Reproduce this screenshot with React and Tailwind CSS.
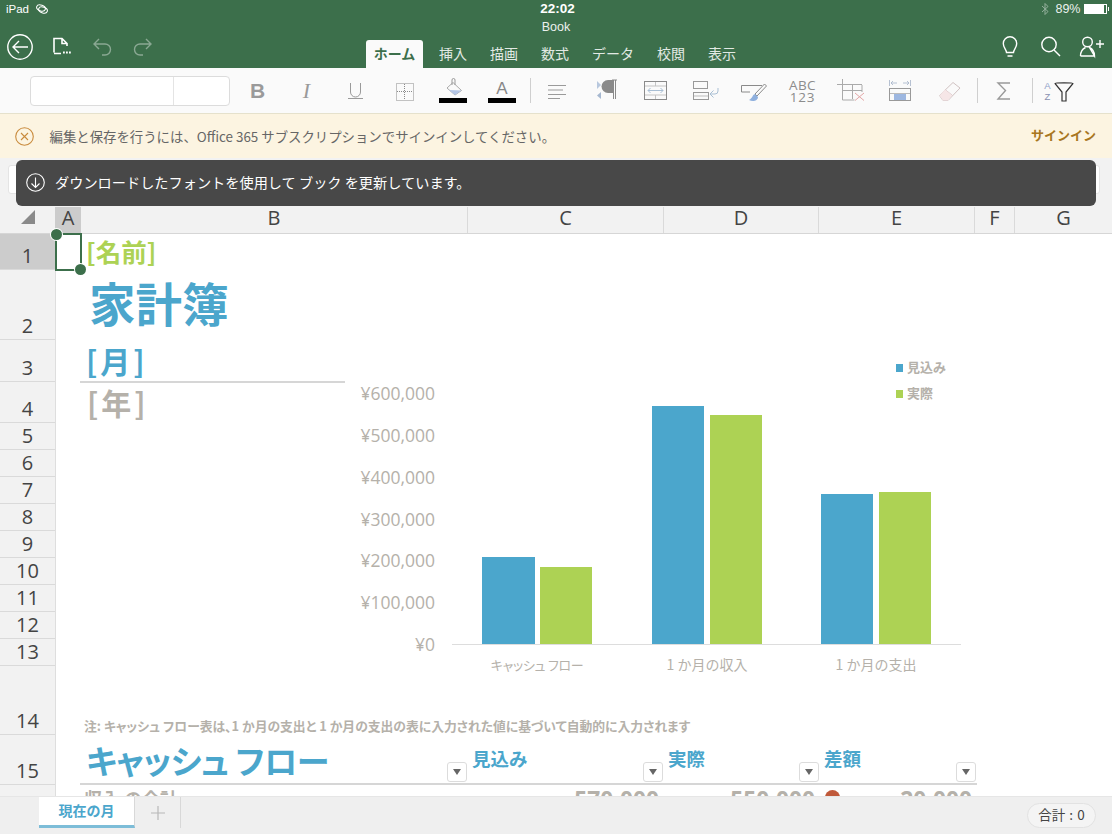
const CJK = { fontFamily: '"Noto Sans CJK JP", "Noto Sans", sans-serif' };
const LAT = { fontFamily: '"Open Sans", "Noto Sans CJK JP", sans-serif' };
const PALT = { fontFeatureSettings: '"palt"' };

function Btn({ children }) {
  return (
    <div className="w-[49px] flex justify-center shrink-0">
      <svg width="31" height="30" viewBox="0 0 31 30" fill="none" className="overflow-visible">{children}</svg>
    </div>
  );
}
const Sep = () => (
  <div className="w-[6px] flex justify-center shrink-0 pt-[2px]">
    <div className="w-px h-[25px] bg-[#cfcfcf]" />
  </div>
);

function HIcon({ children, dim }) {
  return (
    <svg width="30" height="30" viewBox="0 0 30 30" fill="none" stroke="white" strokeWidth="1.4" className={dim ? "opacity-40" : ""}>{children}</svg>
  );
}

function Header() {
  return (
    <div className="h-[68px] shrink-0 bg-[#3c6f4b] flex flex-col text-white" style={CJK}>
      <div className="h-[18px] grid grid-cols-[1fr_auto_1fr] items-center text-[11.5px] leading-[18px]" style={{ fontFamily: '"Liberation Sans", sans-serif' }}>
        <div className="flex items-center">
          <span className="ml-[6px]">iPad</span>
          <svg width="14" height="10" viewBox="0 0 14 10" fill="none" stroke="white" strokeWidth="1" className="ml-[6px]">
            <ellipse cx="6" cy="4" rx="4.5" ry="3" transform="rotate(20 6 4)" />
            <ellipse cx="8" cy="6" rx="4.5" ry="3" transform="rotate(20 8 6)" />
          </svg>
        </div>
        <span className="text-center text-[13.5px] font-bold pl-[3px]">22:02</span>
        <div className="flex items-center justify-end">
          <svg width="8" height="12" viewBox="0 0 8 12" fill="none" stroke="white" strokeWidth="0.9" className="opacity-50 mr-[6px]">
            <path d="M1 3l6 5.500-3 3V.5l3 3L1 9" />
          </svg>
          <span className="text-[12.5px] mr-[3px] opacity-90">89%</span>
          <div className="w-[23px] h-[10px] border border-white flex mr-[1px]">
            <div className="w-[19px] bg-white" />
          </div>
          <div className="w-[1.5px] h-[4px] bg-white mr-[3px]" />
        </div>
      </div>
      <div className="flex-1 flex">
        <div className="w-[158px] pl-[5px] pt-[14px] flex gap-[11px] items-start">
          <HIcon>
            <circle cx="15" cy="15" r="12.2" />
            <path d="M23 15H8M14 9l-6 6 6 6" />
          </HIcon>
          <HIcon>
            <path d="M8 20.500V6.500h8l5 5V14M16 7v4.500h5M8 21.500h7" strokeWidth="1.600" />
            <path d="M17 20.500h1.800M20 20.500h1.800M23 20.500h1.800" strokeWidth="2.200" />
          </HIcon>
          <HIcon dim>
            <path d="M12 7l-5 5 5 5M7 12h11a5.500 5.500 0 0 1 0 11h-3" />
          </HIcon>
          <HIcon dim>
            <g transform="translate(30 0) scale(-1 1)">
              <path d="M12 7l-5 5 5 5M7 12h11a5.500 5.500 0 0 1 0 11h-3" />
            </g>
          </HIcon>
        </div>
        <div className="flex-1 flex flex-col">
          <div className="h-[18px] leading-[18px] text-center text-[12.5px] opacity-90" style={{ fontFamily: '"Liberation Sans", sans-serif' }}>Book</div>
          <div className="mt-[4px] h-[28px] flex pl-[208px] text-[14px] leading-[27px]">
            <div className="w-[57px] mr-[4.5px] bg-[#fafafa] rounded-t-[3px] text-[#3c6f4b] font-bold text-center">ホーム</div>
            {["挿入", "描画", "数式", "データ", "校閲", "表示"].map((t) => (
              <div key={t} className="px-[11.5px] whitespace-nowrap opacity-85">{t}</div>
            ))}
          </div>
        </div>
        <div className="w-[158px] pr-[5px] pt-[14px] flex gap-[11px] items-start justify-end">
          <HIcon>
            <path d="M12.500 24h5M11.500 20.500c-.3-3.500-3.200-4.800-3.200-9a6.700 6.700 0 0 1 13.400 0c0 4.200-2.900 5.500-3.200 9z" />
          </HIcon>
          <HIcon>
            <circle cx="13" cy="12.500" r="7.200" />
            <path d="M18 18l6 6" />
          </HIcon>
          <HIcon>
            <circle cx="10.500" cy="10" r="4.800" />
            <path d="M3.500 24c0-4.500 2-7 5-8.500M12.500 15.500c3 1.500 5 4 5 8.500zM3.500 24h14" />
            <path d="M19 12h8M23 8v8" />
          </HIcon>
        </div>
      </div>
    </div>
  );
}

function Toolbar() {
  const g = "#9a9a9a";
  return (
    <div className="h-[45px] shrink-0 bg-[#fafafa] flex items-start pt-[8px] pl-[30px]">
      <div className="w-[200px] h-[30px] bg-white border border-[#dcdcdc] rounded-[4px] flex shrink-0 mr-[3px]">
        <div className="w-[143px] border-r border-[#e4e4e4]" />
      </div>
      <Btn><text x="15.500" y="22" textAnchor="middle" fontSize="21" fontWeight="700" fill={g} style={{ fontFamily: '"Liberation Sans", sans-serif' }}>B</text></Btn>
      <Btn><text x="15.500" y="22" textAnchor="middle" fontSize="22" fontStyle="italic" fill={g} style={{ fontFamily: '"Liberation Serif", serif' }}>I</text></Btn>
      <Btn><path d="M10.500 7v9a5 5 0 0 0 10 0V7M8 22.500h15" stroke={g} /></Btn>
      <Btn>
        <rect x="7.500" y="7.500" width="17" height="17" stroke="#8a8a8a" strokeDasharray="1 1" />
        <path d="M15.500 8v16M8 15.500h16" stroke="#8a8a8a" strokeDasharray="1 1" />
      </Btn>
      <Btn>
        <path d="M9 12l6-5.500 8.500 8-6.500 4.500z" stroke="#aaa" />
        <path d="M11 14l12.500.5-6.500 4.500z" fill="#b4c6e6" />
        <path d="M14 9V4a1.500 1.500 0 0 1 3 0v5" stroke="#999" />
        <rect x="1" y="22" width="28" height="5" fill="#000" />
      </Btn>
      <Btn>
        <text x="15" y="18" textAnchor="middle" fontSize="17" fill="#888" style={{ fontFamily: '"Liberation Sans", sans-serif' }}>A</text>
        <rect x="1" y="22" width="28" height="5" fill="#000" />
      </Btn>
      <Sep />
      <Btn><path d="M6 9.500h18M6 14h15M6 18.500h18M6 22.500h12" stroke={g} /></Btn>
      <Btn>
        <path d="M22 4h-5a6.500 6.500 0 0 0 0 13h5z" fill="#8a8a8a" />
        <path d="M22.500 4v19M24.500 4v19M21 4h5" stroke="#8a8a8a" />
        <path d="M6 5l4 4-4 4z" fill="#b8c8de" />
        <path d="M10 16l-4 3.500 4 3.500z" fill="#a6b8d0" />
      </Btn>
      <Btn>
        <rect x="4.500" y="5.500" width="22" height="18" stroke="#8a8a8a" />
        <path d="M5 10h21M5 19h21M15.500 6v4M15.500 19v4" stroke="#c4c4c4" />
        <path d="M8 14.500h15M10.500 12l-2.500 2.500 2.500 2.500M20.500 12l2.500 2.500-2.500 2.500" stroke="#a9bfd4" />
      </Btn>
      <Btn>
        <rect x="4.500" y="5.500" width="14" height="7" stroke="#999" />
        <rect x="4.500" y="16.500" width="15" height="7" stroke="#999" />
        <path d="M5 20h14" stroke="#bbb" />
        <path d="M29 12v3a3 3 0 0 1-3 3h-5M24.500 14.500L21 18l3.500 3.500" stroke="#a9bfd4" />
      </Btn>
      <Btn>
        <path d="M24 9.500H3.500v6.500H12" stroke="#8a8a8a" />
        <path d="M26.500 8l2 2-9.500 10-2-2z" stroke="#8a8a8a" />
        <path d="M17 18c-3 1-2 4-6 6 4 2.500 9 .5 9-3z" fill="#8fb0de" />
      </Btn>
      <Btn>
        <text x="15.500" y="14" textAnchor="middle" fontSize="13.500" letterSpacing=".4" fill="#8c8c8c" style={{ fontFamily: '"Open Sans", sans-serif' }}>ABC</text>
        <text x="15.500" y="26" textAnchor="middle" fontSize="13.500" letterSpacing=".8" fill="#8c8c8c" style={{ fontFamily: '"Open Sans", sans-serif' }}>123</text>
      </Btn>
      <Btn>
        <path d="M1 8.500h25M6.500 3v21h12M6.500 14.500h19.500M16.500 9v14M26 9v7" stroke="#aaa" />
        <path d="M19 17l9 7.500M28 17l-9 7.500" stroke="#e3a6a6" />
      </Btn>
      <Btn>
        <path d="M4.500 4v6M25.500 4v6M6 7h6M24 7h-6M8 5L6 7l2 2M22 5l2 2-2 2" stroke="#a5b2c8" strokeWidth=".8" />
        <rect x="4.500" y="12.500" width="21" height="12" stroke="#999" />
        <rect x="9" y="18" width="12" height="6" fill="#9db7e0" />
        <path d="M5 17.500h20" stroke="#bbb" />
      </Btn>
      <Btn>
        <path d="M19 6.500l7 5.500-12 12.500H9L5.500 19.500z" stroke="#d0c2c2" />
        <path d="M11 13.500l7.500 6" stroke="#dcc6c8" />
        <path d="M5.500 19.500L11 13.500l7 6-4 5H9z" fill="#f6e6e7" />
      </Btn>
      <Sep />
      <Btn><path d="M21 7H9l7.500 7.500L9 23h12" stroke="#999" strokeWidth="1.400" /></Btn>
      <Sep />
      <Btn>
        <text x="3.500" y="13" textAnchor="middle" fontSize="9.500" fill="#8f9fc8" style={{ fontFamily: '"Liberation Sans", sans-serif' }}>A</text>
        <text x="3.500" y="24" textAnchor="middle" fontSize="9.500" fill="#8890b0" style={{ fontFamily: '"Liberation Sans", sans-serif' }}>Z</text>
        <path d="M11 7.500c0-1 18-1 18 0L22 16v9h-4v-9z" stroke="#333" strokeWidth="1.200" />
      </Btn>
    </div>
  );
}

function Banner() {
  return (
    <div className="h-[45px] shrink-0 bg-[#fcf4e1] border-t border-[#e5e1cc] flex items-center pl-[15px] pr-[16px] text-[13.4px]" style={CJK}>
      <svg width="19" height="19" viewBox="0 0 19 19" fill="none" stroke="#c98b3d" strokeWidth="1.100">
        <circle cx="9.500" cy="9.500" r="8.800" />
        <path d="M6 6l7 7M13 6l-7 7" />
      </svg>
      <span className="ml-[15.5px] text-[#666]">編集と保存を行うには、Office 365 サブスクリプションでサインインしてください。</span>
      <span className="ml-auto text-[13px] font-bold text-[#a8771f] pb-[3px]">サインイン</span>
    </div>
  );
}

function FormulaBar() {
  return (
    <div className="h-[49px] shrink-0 bg-[#f2f2f2] relative pt-[7px] pl-[8px] pr-[12px]" style={CJK}>
      <div className="h-[29px] bg-white border border-[#e4e4e4] rounded-[3px]" />
      <div className="absolute left-[16px] right-[16px] top-[2px] h-[46px] rounded-[6px] bg-[#484848] flex items-center pl-[10px] pb-[1px] text-white text-[14.2px]">
        <svg width="19" height="19" viewBox="0 0 19 19" fill="none" stroke="white" strokeWidth="1.100">
          <circle cx="9.500" cy="9.500" r="8.800" />
          <path d="M9.500 4.500v9.500M5.500 10.500l4 4 4-4" />
        </svg>
        <span className="ml-[10px]">ダウンロードしたフォントを使用して ブック を更新しています。</span>
      </div>
    </div>
  );
}

const COLS = [
  ["A", "w-[26px] bg-[#cccccc]"],
  ["B", "w-[387px] border-r border-[#dadada]"],
  ["C", "w-[196px] border-r border-[#dadada]"],
  ["D", "w-[155px] border-r border-[#dadada]"],
  ["E", "w-[156px] border-r border-[#dadada]"],
  ["F", "w-[40px] border-r border-[#dadada]"],
  ["G", "flex-1"],
];
const ROWS = [36, 70, 42, 41, 27, 27, 27, 27, 27, 27, 27, 27, 27, 69, 50, 40];

function Dropdown({ pos }) {
  return (
    <div className={`absolute bottom-[1px] w-[20px] h-[20px] bg-white border border-[#dcdcdc] rounded-[3px] flex items-center justify-center ${pos}`}>
      <svg width="8" height="6" viewBox="0 0 8 6"><path d="M0 0h8L4 6z" fill="#666" /></svg>
    </div>
  );
}

function Chart() {
  const gray = "#b5b1aa";
  const bars = [
    [482, 557, 53, "#4ba6cc"], [540, 567, 52, "#add254"],
    [652, 406, 52, "#4ba6cc"], [710, 415, 52, "#add254"],
    [821, 494, 52, "#4ba6cc"], [879, 492, 52, "#add254"],
  ];
  const ticks = [["¥600,000", 393], ["¥500,000", 435], ["¥400,000", 477], ["¥300,000", 519], ["¥200,000", 560], ["¥100,000", 602], ["¥0", 644]];
  return (
    <svg className="absolute left-[345px] top-[143px]" width="630" height="330" viewBox="345 350 630 330" style={CJK}>
      {ticks.map(([t, y]) => (
        <text key={t} x="435" y={y + 7} textAnchor="end" fontSize="17.500" fill={gray} style={LAT}>{t}</text>
      ))}
      {bars.map(([x, y, w, c]) => (
        <rect key={x} x={x} y={y} width={w} height={644 - y} fill={c} />
      ))}
      <path d="M452 644.500h509" stroke="#dddddd" />
      <text x="537" y="670" textAnchor="middle" fontSize="13" letterSpacing="-.3" fill={gray} style={PALT}>キャッシュ フロー</text>
      <text x="707" y="670" textAnchor="middle" fontSize="14" fill={gray}>1 か月の収入</text>
      <text x="876" y="670" textAnchor="middle" fontSize="14" fill={gray}>1 か月の支出</text>
      <rect x="896" y="364" width="7" height="8" fill="#4ba6cc" />
      <rect x="896" y="390" width="7" height="8" fill="#add254" />
      <text x="907" y="372" fontSize="13" fontWeight="700" fill={gray}>見込み</text>
      <text x="907" y="398" fontSize="13" fontWeight="700" fill={gray}>実際</text>
    </svg>
  );
}

function Sheet() {
  return (
    <div className="flex-1 min-h-0 relative overflow-hidden bg-white" style={CJK}>
      <div className="h-[27px] flex bg-[#f2f2f2] border-b border-[#d6d6d6] text-[20px] text-[#444] leading-[22px]" style={LAT}>
        <div className="w-[55px] pl-[21px] pt-[3px]">
          <svg width="14" height="14" viewBox="0 0 14 14"><path d="M14 0v14H0z" fill="#8a8a8a" /></svg>
        </div>
        {COLS.map(([c, cl]) => (
          <div key={c} className={`text-center ${cl}`}>{c}</div>
        ))}
      </div>
      <div className="flex">
        <div className="w-[56px] shrink-0 border-r border-[#dedede] bg-[#f2f2f2] text-[20px] text-[#444]" style={LAT}>
          {ROWS.map((h, i) => (
            <div key={i} style={{ height: h }} className={`flex items-end justify-center leading-[27px] border-b border-[#dadada] ${i === 0 ? "bg-[#cccccc]" : ""}`}>
              {i + 1}
            </div>
          ))}
        </div>
        <div className="grid grid-cols-[25px_386px_196px_155px_156px] grid-rows-[36px_70px_42px_41px_243px_69px_50px_40px] font-bold">
          <div className="col-start-2 row-start-1 pl-[5px] text-[25.5px] leading-[34px] text-[#add254]">[名前]</div>
          <div className="col-start-2 row-start-2 pl-[8px] text-[46.5px] leading-[64px] text-[#4ba6cc]">家計簿</div>
          <div className="col-start-1 col-span-2 row-start-3">
            <div className="w-[265px] h-[43px] border-b-2 border-[#d6d6d6] pl-[6px] text-[30px] tracking-[3px] leading-[40px] text-[#4ba6cc] ml-[24px]">[月]</div>
          </div>
          <div className="col-start-2 row-start-4 pl-[6px] text-[30px] tracking-[3px] leading-[41px] text-[#b5b1aa]">[年]</div>
          <div className="col-start-2 col-span-4 row-start-6 flex items-end pl-[3px] text-[12.8px] text-[#b5b1aa] whitespace-nowrap" style={PALT}>
            注: キャッシュ フロー表は、1 か月の支出と 1 か月の支出の表に入力された値に基づいて自動的に入力されます
          </div>
          <div className="col-start-1 col-span-2 row-start-7 relative border-b-2 border-[#d6d6d6] ml-[24px] pl-[6px] text-[33px] tracking-[-0.5px] leading-[50px] text-[#4ba6cc] whitespace-nowrap" style={PALT}>
            キャッシュ フロー
            <Dropdown pos="right-0" />
          </div>
          <div className="col-start-3 row-start-7 relative border-b-2 border-[#d6d6d6] pl-[5px] text-[18.500px] leading-[46px] text-[#4ba6cc]">
            見込み<Dropdown pos="right-0" />
          </div>
          <div className="col-start-4 row-start-7 relative border-b-2 border-[#d6d6d6] pl-[5px] text-[18.500px] leading-[46px] text-[#4ba6cc]">
            実際<Dropdown pos="right-[-1px]" />
          </div>
          <div className="col-start-5 row-start-7 relative border-b-2 border-[#d6d6d6] -mr-[3px] pl-[6px] text-[18.500px] leading-[46px] text-[#4ba6cc]">
            差額<Dropdown pos="right-[1px]" />
          </div>
          <div className="col-start-2 row-start-8 pl-[3px] text-[18px] leading-[26px] text-[#b5b1aa] whitespace-nowrap">収入 の合計</div>
          <div className="col-start-3 row-start-8 text-right pr-[4px] text-[22.8px] leading-[30px] text-[#b5b1aa]" style={LAT}>570,000</div>
          <div className="col-start-4 row-start-8 text-right pr-[3px] text-[22.8px] leading-[30px] text-[#b5b1aa]" style={LAT}>550,000</div>
          <div className="col-start-5 row-start-8 flex justify-between pl-[7px] pr-[2px] text-[22.8px] leading-[30px] text-[#b5b1aa]" style={LAT}>
            <div className="w-[15px] h-[15px] rounded-full bg-[#c0593a] mt-[5px]" />
            <span>20,000</span>
          </div>
        </div>
      </div>
      <Chart />
      <div className="absolute left-[55px] top-[26px] w-[27px] h-[38px] border-2 border-[#3c6f4b]">
        <div className="absolute -left-[6px] -top-[6px] w-[11px] h-[11px] rounded-full bg-[#3c6f4b] ring-1 ring-white" />
        <div className="absolute -right-[6px] -bottom-[6px] w-[11px] h-[11px] rounded-full bg-[#3c6f4b] ring-1 ring-white" />
      </div>
    </div>
  );
}

function BottomBar() {
  return (
    <div className="h-[38px] shrink-0 bg-[#efefef] border-t border-[#e6e6e6] flex items-start pl-[39px] pr-[16px]" style={CJK}>
      <div className="w-[96px] h-[31px] bg-white border-b-[3px] border-[#7dbdd8] border-r border-r-[#d8d8d8] text-center text-[14px] font-bold text-[#4ba6cc] leading-[27px]">現在の月</div>
      <div className="w-[46px] h-[31px] border-r border-[#d8d8d8] flex items-center justify-center">
        <svg width="16" height="16" viewBox="0 0 16 16" stroke="#b8b8b8" strokeWidth="1.200"><path d="M8 1v14M1 8h14" /></svg>
      </div>
      <div className="ml-auto mt-[6px] h-[25px] w-[69px] rounded-full bg-[#f4f4f4] border border-[#e2e2e2] flex items-center justify-center text-[13.500px] leading-[20px] pb-[4px] text-[#444] [word-spacing:1px]">合計 : 0</div>
    </div>
  );
}

export default function App() {
  return (
    <div className="w-[1112px] h-[834px] flex flex-col overflow-hidden">
      <Header />
      <Toolbar />
      <Banner />
      <FormulaBar />
      <Sheet />
      <BottomBar />
    </div>
  );
}
